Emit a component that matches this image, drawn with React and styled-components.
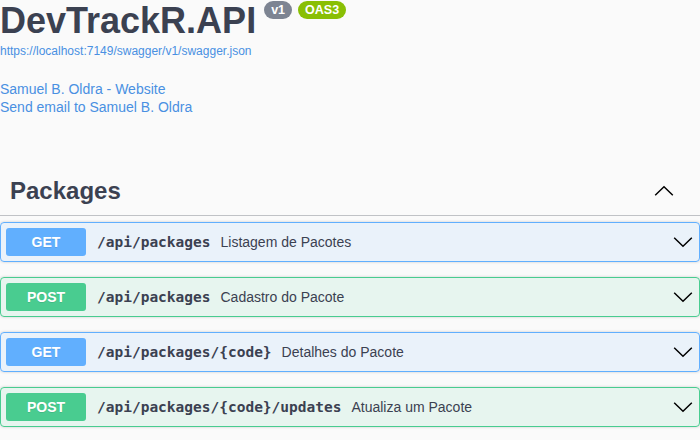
import styled, { createGlobalStyle } from "styled-components"

const GlobalStyle = createGlobalStyle`
  html, body {
    margin: 0;
    padding: 0;
    background: #fafafa;
  }
  body {
    font-family: "Liberation Sans", Arial, sans-serif;
    color: #3b4151;
  }
`

const METHODS = {
  GET: { main: "#61affe", tint: "rgba(97, 175, 254, 0.1)" },
  POST: { main: "#49cc90", tint: "rgba(73, 204, 144, 0.1)" },
}

const operations = [
  { method: "GET", path: "/api/packages", summary: "Listagem de Pacotes" },
  { method: "POST", path: "/api/packages", summary: "Cadastro do Pacote" },
  { method: "GET", path: "/api/packages/{code}", summary: "Detalhes do Pacote" },
  { method: "POST", path: "/api/packages/{code}/updates", summary: "Atualiza um Pacote" },
]

const Page = styled.div`
  width: 700px;
`

const Info = styled.div`
  display: flex;
  flex-direction: column;
  align-items: flex-start;
`

const TitleRow = styled.div`
  display: flex;
  align-items: flex-start;
`

const Title = styled.h2`
  margin: 0;
  font-size: 36px;
  line-height: 41px;
  font-weight: 700;
  color: #3b4151;
`

const Badge = styled.span`
  margin: 1px 0 0 ${(p) => (p.$first ? 8 : 6)}px;
  padding: 1px 7px;
  border-radius: 57px;
  background: ${(p) => p.$color};
  color: #fff;
  font-size: 12.5px;
  line-height: 16px;
  font-weight: 700;
`

const SpecLink = styled.a`
  margin-top: 3px;
  font-size: 12px;
  line-height: 14px;
  color: #4990e2;
  text-decoration: none;
`

const Contacts = styled.div`
  margin-top: 22px;
  display: flex;
  flex-direction: column;
`

const ContactLink = styled.a`
  font-size: 14px;
  line-height: 18px;
  color: #4990e2;
  text-decoration: none;
`

const TagSection = styled.section`
  margin-top: 51px;
`

const TagHeader = styled.h3`
  display: flex;
  align-items: center;
  justify-content: space-between;
  margin: 0 0 6px;
  padding: 10px 26px 10px 10px;
  font-size: 24px;
  line-height: 28px;
  font-weight: 700;
  color: #3b4151;
  border-bottom: 1px solid rgba(59, 65, 81, 0.3);
`

const Chevron = styled.svg`
  width: 20px;
  height: 20px;
  flex: none;
  transform: ${(p) => (p.$up ? "rotate(180deg)" : "none")};
`

const OpBlock = styled.div`
  margin-bottom: 15px;
  border: 1px solid ${(p) => METHODS[p.$method].main};
  border-radius: 4px;
  background: ${(p) => METHODS[p.$method].tint};
  box-shadow: 0 0 3px rgba(0, 0, 0, 0.19);
`

const Summary = styled.div`
  display: flex;
  align-items: center;
  padding: 5px 6px 5px 5px;
`

const Method = styled.span`
  min-width: 80px;
  padding: 6px 0;
  border-radius: 3px;
  background: ${(p) => METHODS[p.$method].main};
  color: #fff;
  font-size: 14px;
  line-height: 16px;
  font-weight: 700;
  text-align: center;
  text-shadow: 0 1px 0 rgba(0, 0, 0, 0.1);
`

const Path = styled.span`
  padding: 0 10px 0 11px;
  font-family: "DejaVu Sans Mono", "Liberation Mono", monospace;
  font-size: 14.5px;
  font-weight: 700;
  color: #3b4151;
`

const Description = styled.span`
  flex: 1;
  font-size: 14px;
  color: #3b4151;
`

const Arrow = ({ up }) => (
  <Chevron $up={up} viewBox="0 0 20 20">
    <polyline
      points="1.2,5.8 10,14.2 18.8,5.8"
      fill="none"
      stroke="#000"
      strokeWidth="1.5"
      strokeLinejoin="miter"
    />
  </Chevron>
)

const App = () => {
  return (
    <Page>
      <GlobalStyle />
      <Info>
        <TitleRow>
          <Title>DevTrackR.API</Title>
          <Badge $first $color="#7d8492">v1</Badge>
          <Badge $color="#89bf04">OAS3</Badge>
        </TitleRow>
        <SpecLink href="#">https://localhost:7149/swagger/v1/swagger.json</SpecLink>
        <Contacts>
          <ContactLink href="#">Samuel B. Oldra - Website</ContactLink>
          <ContactLink href="#">Send email to Samuel B. Oldra</ContactLink>
        </Contacts>
      </Info>

      <TagSection>
        <TagHeader>
          Packages
          <Arrow up />
        </TagHeader>
        {operations.map((op) => (
          <OpBlock key={op.method + op.path} $method={op.method}>
            <Summary>
              <Method $method={op.method}>{op.method}</Method>
              <Path>{op.path}</Path>
              <Description>{op.summary}</Description>
              <Arrow />
            </Summary>
          </OpBlock>
        ))}
      </TagSection>
    </Page>
  )
}

export default App
